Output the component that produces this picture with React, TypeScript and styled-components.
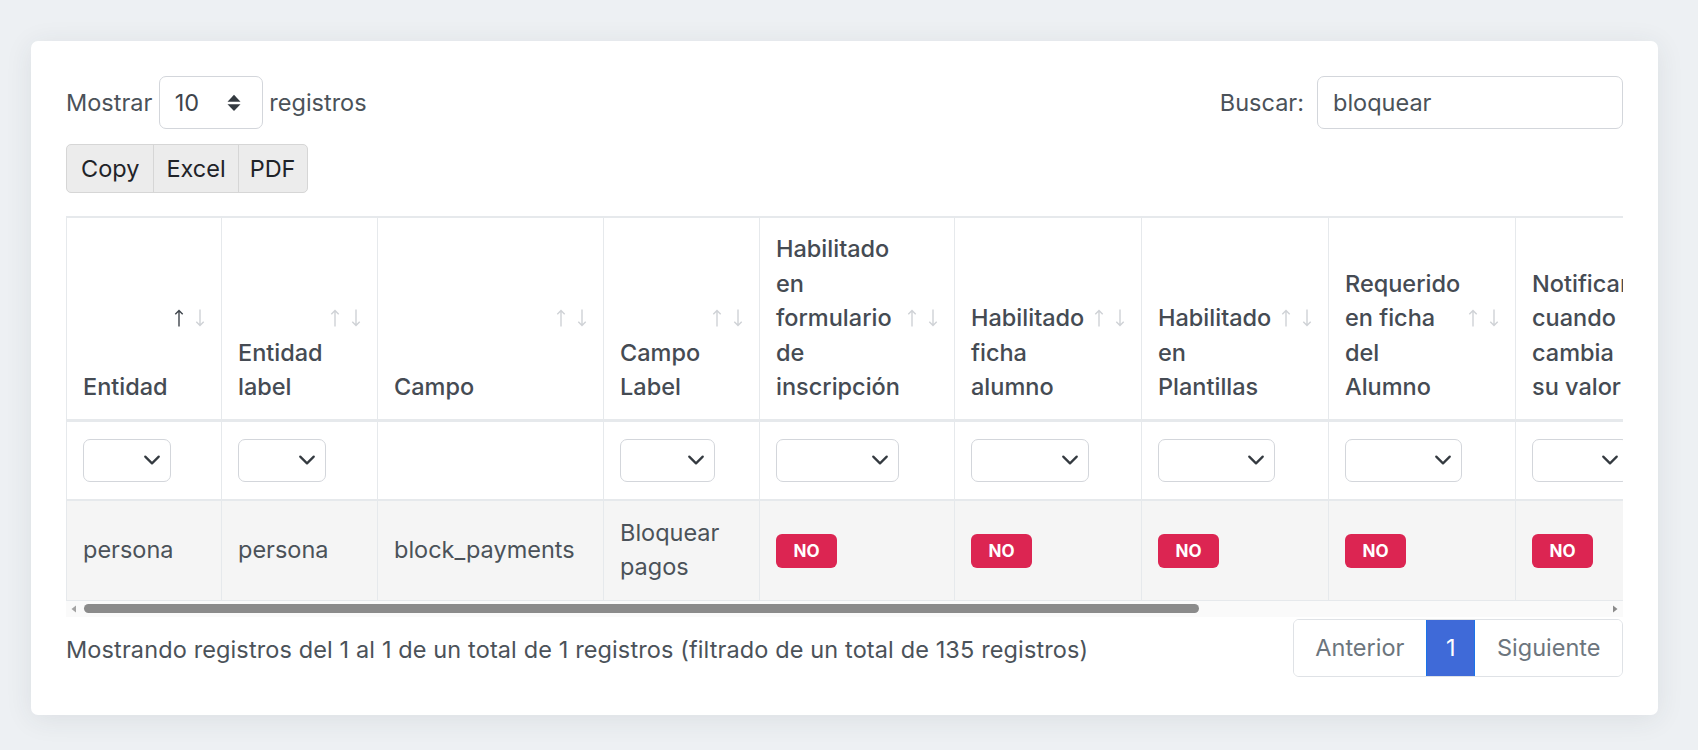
import React from "react";
import styled, { createGlobalStyle } from "styled-components";

const FS = 23.5;
const BORDER = "#e6e9ec";

const GlobalStyle = createGlobalStyle`
  html, body { margin: 0; padding: 0; }
  body {
    background: #edf0f3;
    font-family: Inter, "Noto Sans", sans-serif;
    color: #4b5259;
    font-size: ${FS}px;
  }
  * { box-sizing: border-box; }
`;

const Page = styled.div`
  min-height: 750px;
  padding: 41px 40px 35px 31px;
`;

const Card = styled.div`
  background: #fff;
  border-radius: 7px;
  box-shadow: 0 4px 28px rgba(40, 50, 70, 0.09);
  padding: 35px 35px 38px;
`;

const TopBar = styled.div`
  display: flex;
  justify-content: space-between;
  align-items: center;
  height: 53px;
`;

const LengthControl = styled.label`
  display: flex;
  align-items: center;
  gap: 6.5px;
`;

const LengthSelect = styled.div`
  width: 104px;
  height: 53px;
  border: 1px solid #d3d6db;
  border-radius: 7px;
  display: flex;
  align-items: center;
  justify-content: space-between;
  padding: 0 21px 0 15px;
  color: #3f454c;
`;

const SearchControl = styled.label`
  display: flex;
  align-items: center;
  gap: 13px;
`;

const SearchInput = styled.input`
  width: 306px;
  height: 53px;
  border: 1px solid #d3d6db;
  border-radius: 7px;
  padding: 0 15px;
  font: inherit;
  color: #4b5259;
  outline: none;
`;

const ButtonGroup = styled.div`
  display: inline-flex;
  margin-top: 15px;
  height: 49px;
  border: 1px solid #d6d6d6;
  border-radius: 5px;
  overflow: hidden;
  background: #ececec;
`;

const ExportButton = styled.button<{ $pad: number }>`
  font: inherit;
  font-size: ${FS}px;
  color: #1f2328;
  background: transparent;
  border: none;
  padding: 0 ${(p) => p.$pad}px;
  & + & { border-left: 1px solid #d6d6d6; }
`;

const TableViewport = styled.div`
  margin-top: 23px;
  overflow: hidden;
  width: 100%;
`;

const Table = styled.table<{ $w: number }>`
  width: ${(p) => p.$w}px;
  table-layout: fixed;
  border-collapse: separate;
  border-spacing: 0;
  line-height: 34.5px;
`;

const Col = styled.col<{ $w: number }>`
  width: ${(p) => p.$w}px;
`;

const Th = styled.th`
  padding: 14px 16px;
  border-top: 2px solid ${BORDER};
  border-right: 1px solid ${BORDER};
  border-bottom: 3px solid ${BORDER};
  text-align: left;
  font-weight: 500;
  color: #454b53;
  vertical-align: top;
  &:first-child { border-left: 1px solid ${BORDER}; }
`;

const ThInner = styled.div`
  height: 172.5px;
  display: flex;
  align-items: flex-end;
  gap: 2px;
`;

const ThLabel = styled.div`
  flex: 1;
  min-width: 0;
  white-space: nowrap;
`;

const SortIcons = styled.div`
  align-self: center;
  display: flex;
  gap: 11px;
  flex: none;
  height: 18px;
`;

const FilterTd = styled.td`
  padding: 17px 16px;
  border-right: 1px solid ${BORDER};
  border-bottom: 2px solid ${BORDER};
  &:first-child { border-left: 1px solid ${BORDER}; }
`;

const FilterSelect = styled.div<{ $w: number }>`
  width: ${(p) => p.$w}px;
  height: 43px;
  border: 1px solid #d3d6db;
  border-radius: 7px;
  background: #fff;
  display: flex;
  align-items: center;
  justify-content: flex-end;
  padding-right: 9px;
`;

const FilterSpacer = styled.div`
  height: 43px;
`;

const Td = styled.td`
  padding: 15px 16px;
  background: #f5f5f5;
  border-right: 1px solid ${BORDER};
  border-bottom: 1px solid ${BORDER};
  vertical-align: middle;
  white-space: nowrap;
  color: #4b5259;
  &:first-child { border-left: 1px solid ${BORDER}; }
`;

const Badge = styled.span`
  display: inline-block;
  vertical-align: middle;
  height: 34px;
  line-height: 34px;
  padding: 0 17.5px;
  border-radius: 6px;
  background: #dc2552;
  color: #fff;
  font-weight: 700;
  font-size: 17px;
`;

const ScrollTrack = styled.div`
  display: flex;
  align-items: center;
  height: 16px;
  background: #fafafa;
`;

const ScrollArrow = styled.div`
  width: 16px;
  height: 16px;
  display: flex;
  align-items: center;
  justify-content: center;
  flex: none;
`;

const ScrollRegion = styled.div`
  flex: 1;
  height: 9px;
  padding-left: 2px;
`;

const ScrollThumb = styled.div`
  height: 9px;
  border-radius: 5px;
  background: #8b8b8b;
`;

const Footer = styled.div`
  display: flex;
  justify-content: space-between;
  align-items: center;
  margin-top: 2px;
`;

const InfoText = styled.div`
  color: #4b5259;
  padding-top: 4px;
  letter-spacing: 0.12px;
`;

const Pagination = styled.div`
  display: flex;
  height: 58px;
  border: 1px solid #dfe2e6;
  border-radius: 6px;
  overflow: hidden;
`;

const PageItem = styled.div<{ $active?: boolean }>`
  display: flex;
  align-items: center;
  padding: 0 ${(p) => (p.$active ? 19 : 21.5)}px;
  color: ${(p) => (p.$active ? "#fff" : "#6c757d")};
  background: ${(p) => (p.$active ? "#3f6ad8" : "#fff")};
  border-left: ${(p) => (p.$active ? "1px solid #1a73e8" : "none")};
  border-right: ${(p) => (p.$active ? "1px solid #1a73e8" : "none")};
`;

const SortArrow = ({ dir, active }: { dir: "up" | "down"; active?: boolean }) => (
  <svg width="10" height="18" viewBox="0 0 10 18">
    {dir === "up" ? (
      <path d="M5 17.5V1.5M1.3 5.2L5 1.5l3.7 3.7" stroke={active ? "#3f454c" : "#cfd2d6"} strokeWidth="1.4" fill="none" />
    ) : (
      <path d="M5 0.5V16.5M1.3 12.8L5 16.5l3.7-3.7" stroke={active ? "#3f454c" : "#cfd2d6"} strokeWidth="1.4" fill="none" />
    )}
  </svg>
);

const Chevron = () => (
  <svg width="18" height="18" viewBox="0 0 16 16">
    <path d="M2 5l6 6 6-6" stroke="#343a40" strokeWidth="2" fill="none" strokeLinecap="round" strokeLinejoin="round" />
  </svg>
);

const Caret = () => (
  <svg width="14" height="18" viewBox="0 0 14 18">
    <path d="M0.5 7.7L7 0.8l6.5 6.9z" fill="#343a40" />
    <path d="M0.5 10.2L7 17.1l6.5-6.9z" fill="#343a40" />
  </svg>
);

type Column = { w: number; label: string[]; active?: boolean; filter?: number; cell: React.ReactNode };

const columns: Column[] = [
  { w: 156, label: ["Entidad"], active: true, filter: 88, cell: "persona" },
  { w: 156, label: ["Entidad", "label"], filter: 88, cell: "persona" },
  { w: 226, label: ["Campo"], cell: "block_payments" },
  { w: 156, label: ["Campo", "Label"], filter: 95, cell: <>Bloquear<br />pagos</> },
  { w: 195, label: ["Habilitado", "en", "formulario", "de", "inscripción"], filter: 123, cell: <Badge>NO</Badge> },
  { w: 187, label: ["Habilitado", "ficha", "alumno"], filter: 118, cell: <Badge>NO</Badge> },
  { w: 187, label: ["Habilitado", "en", "Plantillas"], filter: 117, cell: <Badge>NO</Badge> },
  { w: 187, label: ["Requerido", "en ficha", "del", "Alumno"], filter: 117, cell: <Badge>NO</Badge> },
  { w: 187, label: ["Notificar", "cuando", "cambia", "su valor"], filter: 97, cell: <Badge>NO</Badge> },
];

const tableWidth = columns.reduce((s, c) => s + c.w, 0);
const thumbPct = 73.2;

export default function App() {
  return (
    <>
      <GlobalStyle />
      <Page>
        <Card>
          <TopBar>
            <LengthControl>
              Mostrar
              <LengthSelect>
                10
                <Caret />
              </LengthSelect>
              registros
            </LengthControl>
            <SearchControl>
              Buscar:
              <SearchInput defaultValue="bloquear" />
            </SearchControl>
          </TopBar>

          <ButtonGroup>
            <ExportButton $pad={14}>Copy</ExportButton>
            <ExportButton $pad={12}>Excel</ExportButton>
            <ExportButton $pad={11}>PDF</ExportButton>
          </ButtonGroup>

          <TableViewport>
            <Table $w={tableWidth}>
              <colgroup>
                {columns.map((c, i) => (
                  <Col key={i} $w={c.w} />
                ))}
              </colgroup>
              <thead>
                <tr>
                  {columns.map((c, i) => (
                    <Th key={i}>
                      <ThInner>
                        <ThLabel>
                          {c.label.map((l, j) => (
                            <div key={j}>{l}</div>
                          ))}
                        </ThLabel>
                        <SortIcons>
                          <SortArrow dir="up" active={c.active} />
                          <SortArrow dir="down" />
                        </SortIcons>
                      </ThInner>
                    </Th>
                  ))}
                </tr>
                <tr>
                  {columns.map((c, i) => (
                    <FilterTd key={i}>
                      {c.filter ? (
                        <FilterSelect $w={c.filter}>
                          <Chevron />
                        </FilterSelect>
                      ) : (
                        <FilterSpacer />
                      )}
                    </FilterTd>
                  ))}
                </tr>
              </thead>
              <tbody>
                <tr>
                  {columns.map((c, i) => (
                    <Td key={i}>{c.cell}</Td>
                  ))}
                </tr>
              </tbody>
            </Table>
          </TableViewport>
          <ScrollTrack>
            <ScrollArrow>
              <svg width="6" height="8" viewBox="0 0 6 8"><path d="M5 0.5v7L0.5 4z" fill="#a3a3a3" /></svg>
            </ScrollArrow>
            <ScrollRegion>
              <ScrollThumb style={{ width: `${thumbPct}%` }} />
            </ScrollRegion>
            <ScrollArrow>
              <svg width="6" height="8" viewBox="0 0 6 8"><path d="M1 0.5v7L5.5 4z" fill="#8b8b8b" /></svg>
            </ScrollArrow>
          </ScrollTrack>

          <Footer>
            <InfoText>
              Mostrando registros del 1 al 1 de un total de 1 registros (filtrado de un total de 135 registros)
            </InfoText>
            <Pagination>
              <PageItem>Anterior</PageItem>
              <PageItem $active>1</PageItem>
              <PageItem>Siguiente</PageItem>
            </Pagination>
          </Footer>
        </Card>
      </Page>
    </>
  );
}
